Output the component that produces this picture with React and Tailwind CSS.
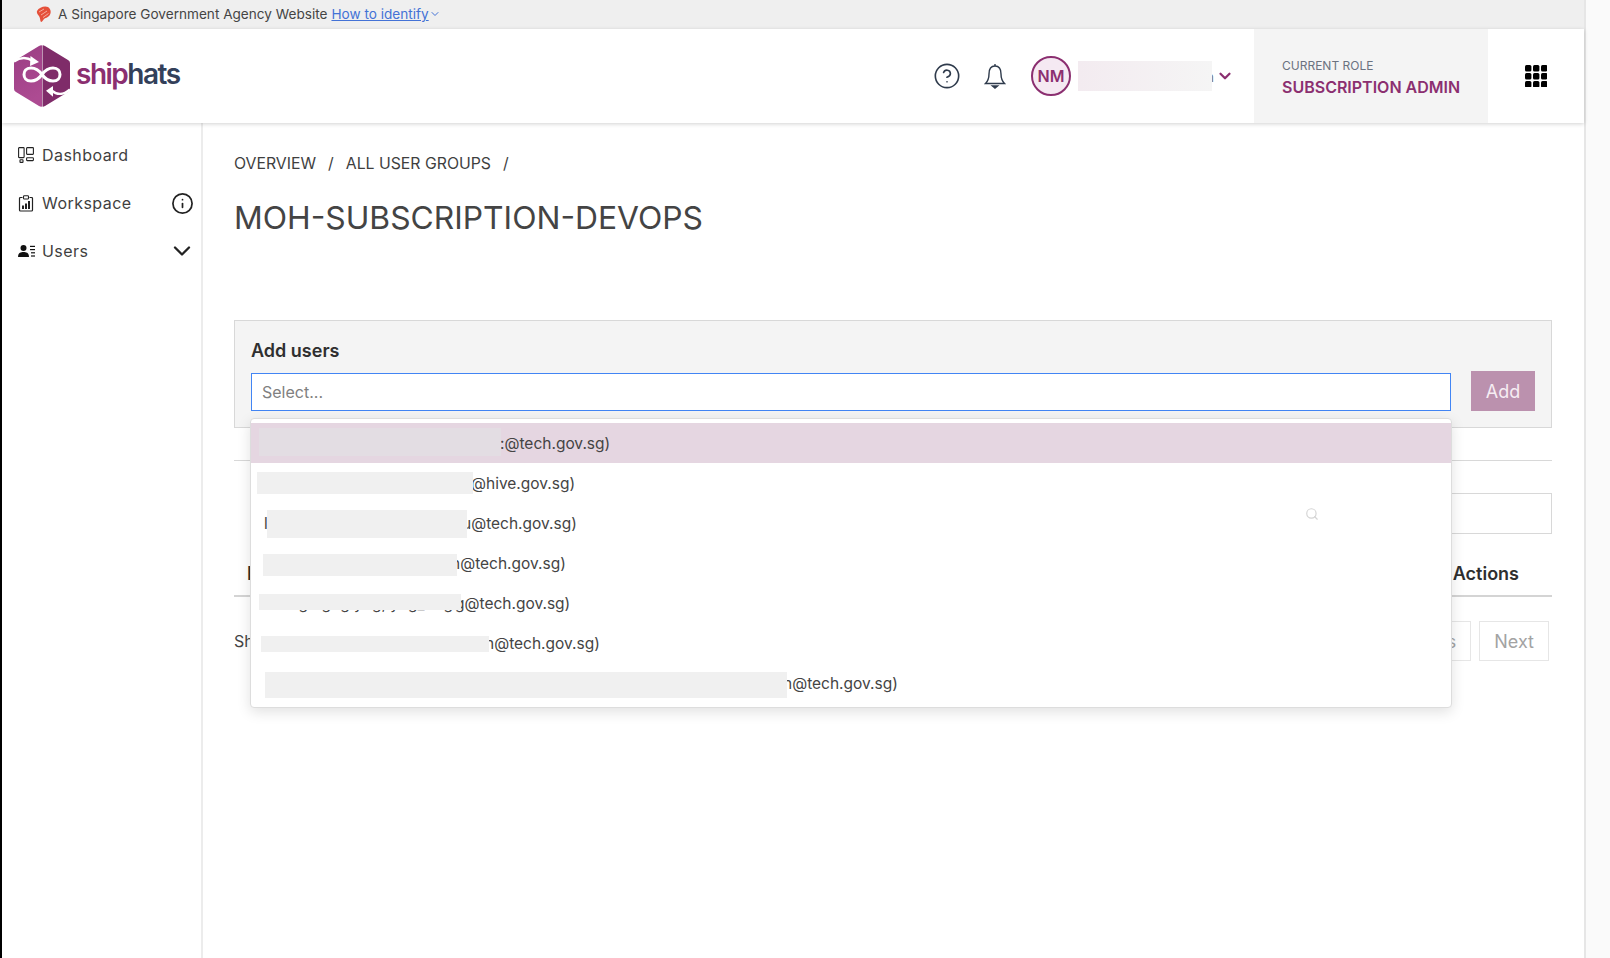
import { ChevronDown, CircleHelp, Info, Search } from 'lucide-react'

const rows = [
  { pl: 'pl-[8px]', w: 'w-[242px]', cover: 'top-[-3px] h-[28px] bg-[#e3dde3]', tail: ':@tech.gov.sg)', tailMl: '-ml-[1px]', active: true },
  { pl: 'pl-[6px]', w: 'w-[216px]', cover: 'top-[1px] h-[22px]', tail: '@hive.gov.sg)', tailMl: '-ml-[2px]' },
  { pl: 'pl-[13px]', lead: 'l', w: 'w-[200px]', cover: 'top-[-1px] h-[28px]', tail: 'u@tech.gov.sg)', tailMl: '-ml-[5px]' },
  { pl: 'pl-[12px]', w: 'w-[194px]', cover: 'top-[3px] h-[22px]', tail: 'n@tech.gov.sg)', tailMl: '-ml-[6px]' },
  { pl: 'pl-[8px]', w: 'w-[202px]', cover: 'top-[3px] h-[16px]', hidden: 'ang ngng yng, yng_nng', tail: 'g@tech.gov.sg)', tailMl: '-ml-[6px]' },
  { pl: 'pl-[10px]', w: 'w-[228px]', cover: 'top-[5px] h-[16px]', hidden: 'anan (nan anan nan, nan', tail: 'n@tech.gov.sg)', tailMl: '-ml-[4px]' },
  { pl: 'pl-[14px]', w: 'w-[522px]', cover: 'top-[1px] h-[26px]', tail: 'n@tech.gov.sg)', tailMl: '-ml-[4px]' },
]

function Logo() {
  return (
    <svg width="58" height="64" viewBox="0 0 58 64" className="shrink-0">
      <defs>
        <linearGradient id="lg" x1="0" y1="0" x2="0.300" y2="1">
          <stop offset="0" stopColor="#9a3d83" />
          <stop offset="1" stopColor="#ad4b92" />
        </linearGradient>
      </defs>
      <path d="M29 1.500 L29 62.500 Q28 63 26 62 L3 48 Q1 47 1 45 V19 Q1 17 3 16 L26 2 Q28 1 29 1.500Z" fill="url(#lg)" />
      <path d="M29.500 1.500 L29.500 62.500 Q30 63 32 62 L55 48 Q57 47 57 45 V19 Q57 17 55 16 L32 2 Q30 1 29.500 1.500Z" fill="#7f2c69" />
      <path d="M29 30.500 C25 25 21 24 18 24 C13 24 11 27.500 11 30.500 C11 33.500 13 37 18 37 C21 37 25 36 29 30.500 C33 25 37 24 40 24 C45 24 47 27.500 47 30.500 C47 33.500 45 37 40 37 C37 37 33 36 29 30.500Z" fill="none" stroke="#fff" strokeWidth="3" />
      <path d="M1 17.500 C6 14 13 12.500 20 17" fill="none" stroke="#fff" strokeWidth="2.400" />
      <path d="M17.500 12 L26 18 L17 22 Z" fill="#fff" />
      <path d="M57 45.500 C52 50 45 52 38.500 46.500" fill="none" stroke="#fff" strokeWidth="2.400" />
      <path d="M40 42 L33 46.700 L40 52.700 Z" fill="#fff" />
    </svg>
  )
}

function Lion() {
  return (
    <svg width="16" height="17" viewBox="0 0 16 17">
      <path d="M1 5 C3 1 9 -0.500 12 1 C15 3 15.500 7 13.500 9.500 C12 11.500 9 12 8 13 C7 14.500 6 16 5 16 C4 15 4.500 12 3 10 C1.500 8.500 0.500 7 1 5Z" fill="#e5503a" />
      <path d="M3 6 L8 3 M5 9 L11 5 M7 11.500 L12.500 7.500" stroke="#f9c4b6" strokeWidth="0.800" fill="none" />
    </svg>
  )
}

function DashboardIcon() {
  return (
    <svg width="16" height="16" viewBox="0 0 16 16" fill="none" stroke="#222" strokeWidth="1.100">
      <rect x="0.600" y="0.600" width="5.500" height="10" rx="0.600" />
      <rect x="8.600" y="0.600" width="6.800" height="6.800" rx="0.600" />
      <rect x="2" y="12.800" width="3" height="2.600" rx="0.500" />
      <rect x="8.600" y="10.800" width="6.800" height="2.800" rx="0.600" />
    </svg>
  )
}

function WorkspaceIcon() {
  return (
    <svg width="16" height="17" viewBox="0 0 16 17" fill="none">
      <path d="M4.500 2.500 H2.500 Q1.500 2.500 1.500 3.500 V15 Q1.500 16 2.500 16 H13.500 Q14.500 16 14.500 15 V3.500 Q14.500 2.500 13.500 2.500 H11.500" stroke="#222" strokeWidth="1.200" />
      <rect x="5.500" y="0.800" width="5" height="3.200" rx="0.800" stroke="#222" strokeWidth="1.100" />
      <rect x="4" y="10.500" width="2" height="3.500" fill="#222" />
      <rect x="7" y="8.500" width="2" height="5.500" fill="#222" />
      <rect x="10" y="6" width="2" height="8" fill="#222" />
    </svg>
  )
}

function UsersIcon() {
  return (
    <svg width="17" height="12" viewBox="0 0 17 12" fill="#111">
      <circle cx="5.500" cy="3" r="3" />
      <path d="M0 12 C0 8 2.500 7 5.500 7 C8.500 7 11 8 11 12 Z" />
      <rect x="12" y="0.800" width="5" height="1.200" />
      <rect x="12" y="4" width="5" height="1.200" />
      <rect x="13" y="7.200" width="4" height="1.200" />
      <rect x="13" y="10.400" width="4" height="1.200" />
    </svg>
  )
}

function BellIcon() {
  return (
    <svg width="22" height="26" viewBox="0 0 22 26" fill="none" stroke="#2f3b4c" strokeWidth="1.400">
      <path d="M11 1 V3" />
      <path d="M11 3 C6.500 3 5 7 5 11 C5 15 4 18 1.500 20.500 H20.500 C18 18 17 15 17 11 C17 7 15.500 3 11 3Z" />
      <path d="M8.500 23 H13.500 L11 25 Z" fill="#2f3b4c" />
    </svg>
  )
}

function GridIcon() {
  return (
    <svg width="22" height="22" viewBox="0 0 22 22" fill="#000">
      {[0, 8, 16].map(y =>
        [0, 8, 16].map(x => <rect key={`${x}-${y}`} x={x} y={y} width="6.400" height="6.400" rx="1.500" />)
      )}
    </svg>
  )
}

function NavItem({ icon, label, right }) {
  return (
    <div className="flex items-center h-[48px] pl-[16px] pr-[7px]">
      <span className="w-[24px] flex items-center">{icon}</span>
      <span className="flex-1 text-[16px] text-[#3f3f3f] tracking-[0.45px]">{label}</span>
      {right}
    </div>
  )
}

function OptionRow({ row }) {
  return (
    <div className={`flex items-center h-[40px] whitespace-nowrap text-[15.5px] text-[#444] ${row.pl} ${row.active ? 'bg-[#e5d6e1]' : ''}`}>
      {row.lead && <span className="w-[3px] overflow-hidden pt-[2px]">{row.lead}</span>}
      <span className={`relative ${row.w} h-[24px] pr-[8px] pt-[1px] text-right`}>
        {row.hidden}
        <span className={`absolute left-0 w-full ${row.cover.includes('bg-') ? row.cover : `${row.cover} bg-[#f0f0f0]`}`} />
      </span>
      <span className={`pt-[2px] ${row.tailMl}`}>{row.tail}</span>
    </div>
  )
}

export default function App() {
  return (
    <div className="flex w-[1610px] h-[958px] overflow-hidden bg-white font-[Inter,sans-serif]">
      <div className="w-[2px] bg-black shrink-0" />

      <div className="w-[1582px] shrink-0 flex flex-col">
        {/* Gov banner */}
        <div className="h-[29px] bg-[#efefef] flex items-center pl-[34px] pb-[1px] gap-[6px] text-[13.6px] text-[#444]">
          <Lion />
          <span>A Singapore Government Agency Website</span>
          <span className="-ml-[2px] flex items-center text-[#4372d6]">
            <span className="underline">How to identify</span>
            <ChevronDown size={12} />
          </span>
        </div>

        {/* Header */}
        <header className="relative z-10 h-[94px] shrink-0 bg-white shadow-[0_1px_4px_rgba(0,0,0,0.18)] flex items-center">
          <div className="flex items-center gap-[5px] pl-[11px]">
            <Logo />
            <span className="text-[28px] font-semibold tracking-[-1.500px] -mt-[5px]">
              <span className="text-[#8b2f70]">ship</span>
              <span className="text-[#33405a]">hats</span>
            </span>
          </div>
          <div className="flex-1" />
          <CircleHelp size={28} strokeWidth={1.400} className="text-[#2f3b4c]" />
          <span className="ml-[23px] flex"><BellIcon /></span>
          <div className="ml-[25px] w-[40px] h-[40px] rounded-full border-2 border-[#8b2f70] bg-[#f5e9f2] text-[#8b2f70] text-[16px] font-semibold flex items-center justify-center">
            NM
          </div>
          <div className="relative ml-[7px] w-[136px] h-[30px] flex items-center justify-end text-[14px] text-[#777]">
            n
            <span className="absolute left-0 top-0 w-[134px] h-full bg-gradient-to-r from-[#f3ebf0] to-[#f5f5f5]" />
          </div>
          <ChevronDown size={18} strokeWidth={3} className="ml-[2px] text-[#8b2f70]" />
          <div className="ml-[20px] w-[234px] h-full bg-[#f4f4f4] pl-[28px] pt-[3px] flex flex-col justify-center">
            <span className="text-[12px] text-[#6b7280] leading-[16px]">CURRENT ROLE</span>
            <span className="mt-[2px] text-[16px] font-semibold text-[#8b2f70] leading-[22px]">SUBSCRIPTION ADMIN</span>
          </div>
          <div className="w-[96px] flex justify-center"><GridIcon /></div>
        </header>

        <div className="flex flex-1 min-h-0">
          {/* Sidebar */}
          <aside className="w-[201px] shrink-0 border-r-2 border-[#ececec] pt-[8px]">
            <NavItem icon={<DashboardIcon />} label="Dashboard" />
            <NavItem icon={<WorkspaceIcon />} label="Workspace" right={<Info size={23} strokeWidth={1.800} className="text-[#222]" />} />
            <NavItem icon={<UsersIcon />} label="Users" right={<ChevronDown size={28} strokeWidth={2} className="text-[#222] -mx-[2px]" />} />
          </aside>

          {/* Main content */}
          <main className="flex-1 pl-[31px] pr-[32px] pt-[29px] text-[#444]">
            <div className="flex items-center text-[15.8px] h-[24px] text-[#3f3f3f]">
              <span>OVERVIEW</span>
              <span className="mx-[12px]">/</span>
              <span>ALL USER GROUPS</span>
              <span className="mx-[12px]">/</span>
            </div>
            <h1 className="mt-[22px] text-[31.8px] leading-[40px] text-[#444] font-normal">MOH-SUBSCRIPTION-DEVOPS</h1>

            <div className="relative mt-[82px]">
              <div className="h-[108px] bg-[#f4f4f4] border border-[#d8d8d8] px-[16px] pt-[16px]">
                <div className="h-[28px] text-[18px] font-semibold text-[#2f2f2f] leading-[28px]">Add users</div>
                <div className="flex items-end gap-[20px] mt-[6px]">
                  <div className="flex-1 h-[38px] bg-white border border-[#4285f4] pl-[10px] flex items-center text-[16px] text-[#808080] mt-[2px]">
                    Select...
                  </div>
                  <button className="w-[64px] h-[40px] bg-[#bb91ae] text-[#f6edf3] text-[18px]">Add</button>
                </div>
              </div>

              {/* Open select menu */}
              <div className="absolute z-20 left-[16px] top-[98px] w-[1202px] h-[290px] py-[4px] bg-white border border-[#dddddd] rounded-[4px] shadow-[0_4px_14px_rgba(0,0,0,0.12)]">
                {rows.map((row, i) => <OptionRow key={i} row={row} />)}
              </div>
            </div>

            <div className="mt-[32px] border-t border-[#d8d8d8]" />

            <div className="mt-[32px] ml-auto relative w-[260px] h-[41px] border border-[#d8d8d8] flex items-center pl-[12px]">
              <Search size={14} className="relative z-30 text-[#d4d4d4]" />
            </div>

            <div className="h-[63px] border-b-2 border-[#d4d4d4] flex items-end justify-between pb-[8px] pl-[13px] pr-[33px] text-[18px] font-semibold text-[#2f2f2f]">
              <span>Name</span>
              <span>Actions</span>
            </div>

            <div className="mt-[24px] flex items-center justify-between pr-[3px]">
              <span className="text-[16px] text-[#444]">Showing 0 to 0 of 0 entries</span>
              <div className="flex gap-[8px] text-[18px] text-[#a3a3a3]">
                <button className="h-[40px] px-[14px] border border-[#e6e6e6]">Previous</button>
                <button className="h-[40px] px-[14px] border border-[#e6e6e6]">Next</button>
              </div>
            </div>
          </main>
        </div>
      </div>

      <div className="flex-1 bg-[#fafafa] border-l-2 border-[#e6e6e6]" />
    </div>
  )
}
